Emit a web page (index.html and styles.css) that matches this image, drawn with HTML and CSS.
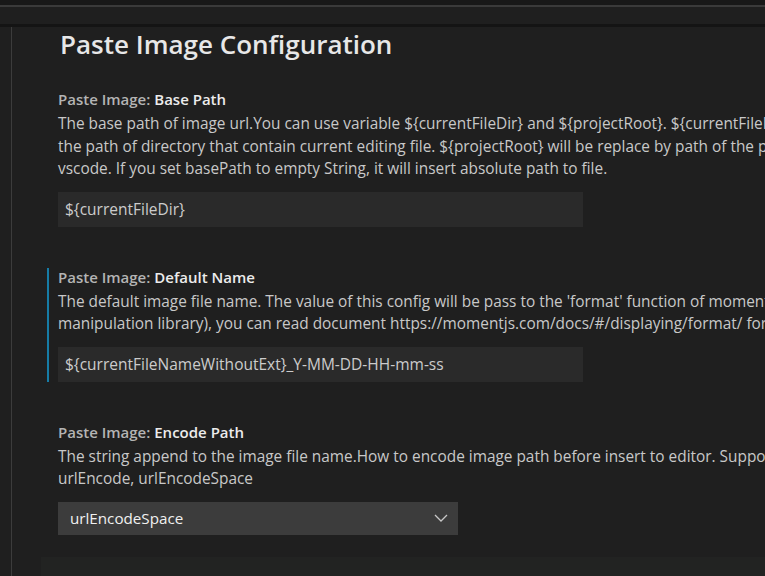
FILE: index.html
```html
<!DOCTYPE html>
<html lang="en">
<head>
<meta charset="utf-8">
<title>Paste Image Configuration</title>
<link rel="stylesheet" href="styles.css">
</head>
<body>
<div class="topbar"></div>
<div class="tabs"></div>
<div class="shadow"></div>
<div class="main">
  <div class="gutter"></div>
  <div class="editor">
    <h1 class="title">Paste Image Configuration</h1>

    <div class="setting">
      <div class="label"><span class="cat">Paste Image: </span><span class="name">Base Path</span></div>
      <div class="desc">The base path of image url.You can use variable ${currentFileDir} and ${projectRoot}. ${currentFileDir} will be replace by<br>the path of directory that contain current editing file. ${projectRoot} will be replace by path of the project opened in<br>vscode. If you set basePath to empty String, it will insert absolute path to file.</div>
      <div class="input">${currentFileDir}</div>
    </div>

    <div class="setting focused">
      <div class="label"><span class="cat">Paste Image: </span><span class="name">Default Name</span></div>
      <div class="desc">The default image file name. The value of this config will be pass to the 'format' function of moment library(a js time<br>manipulation library), you can read document https://momentjs.com/docs/#/displaying/format/ for advanced usage.</div>
      <div class="input">${currentFileNameWithoutExt}_Y-MM-DD-HH-mm-ss</div>
    </div>

    <div class="setting last">
      <div class="label"><span class="cat">Paste Image: </span><span class="name">Encode Path</span></div>
      <div class="desc">The string append to the image file name.How to encode image path before insert to editor. Support options: none,<br>urlEncode, urlEncodeSpace</div>
      <div class="select">
        <span class="select-value">urlEncodeSpace</span>
        <svg class="chevron" width="14" height="8" viewBox="0 0 14 8"><polyline points="1,1 7,7 13,1" fill="none" stroke="#c8c8c8" stroke-width="1.3"/></svg>
      </div>
    </div>

    <div class="next-panel"></div>
  </div>
</div>
</body>
</html>
```

FILE: styles.css
```css
html, body {
  margin: 0;
  padding: 0;
}
body {
  width: 765px;
  height: 576px;
  overflow: hidden;
  background: #1f1f1f;
  font-family: "Segoe UI", "Open Sans", sans-serif;
  color: #cccccc;
}
.topbar {
  height: 5px;
  background: #181818;
  border-bottom: 2px solid #3a3a3a;
}
.tabs {
  height: 17px;
  background: #1f1f1f;
}
.shadow {
  height: 3px;
  background: #141414;
}
.main {
  display: flex;
  height: 549px;
  overflow: hidden;
}
.gutter {
  width: 11px;
  flex: none;
  border-right: 1px solid #3c3c3c;
}
.editor {
  flex: 1;
  min-width: 0;
  padding-left: 35px;
}
.title {
  margin: 0 0 0 13px;
  padding: 0;
  font-size: 26px;
  line-height: 35px;
  font-weight: 600;
  color: #e7e7e7;
  height: 63px;
  white-space: nowrap;
}
.setting {
  border-left: 2px solid transparent;
  padding-left: 9px;
  margin-bottom: 41px;
  white-space: nowrap;
}
.setting.last {
  margin-bottom: 22px;
}
.setting.focused {
  border-left-color: #167ca6;
}
.label {
  font-size: 15px;
  line-height: 18px;
  font-weight: 600;
}
.cat {
  color: #b4b4b4;
}
.name {
  color: #ececec;
}
.desc {
  margin-top: 5px;
  font-size: 15.4px;
  line-height: 22.5px;
  color: #c8c8c8;
}
.input {
  margin-top: 11px;
  width: 525px;
  height: 35px;
  box-sizing: border-box;
  padding-left: 7px;
  background: #2a2a2a;
  font-size: 15.5px;
  line-height: 35px;
  color: #cccccc;
}
.select {
  margin-top: 11px;
  width: 400px;
  height: 33px;
  box-sizing: border-box;
  padding: 0 10px 0 12px;
  background: #3c3c3c;
  display: flex;
  align-items: center;
  justify-content: space-between;
  font-size: 15.2px;
  color: #f0f0f0;
}
.chevron {
  display: block;
}
.next-panel {
  margin-left: -6px;
  height: 40px;
  background: #222322;
}
```
